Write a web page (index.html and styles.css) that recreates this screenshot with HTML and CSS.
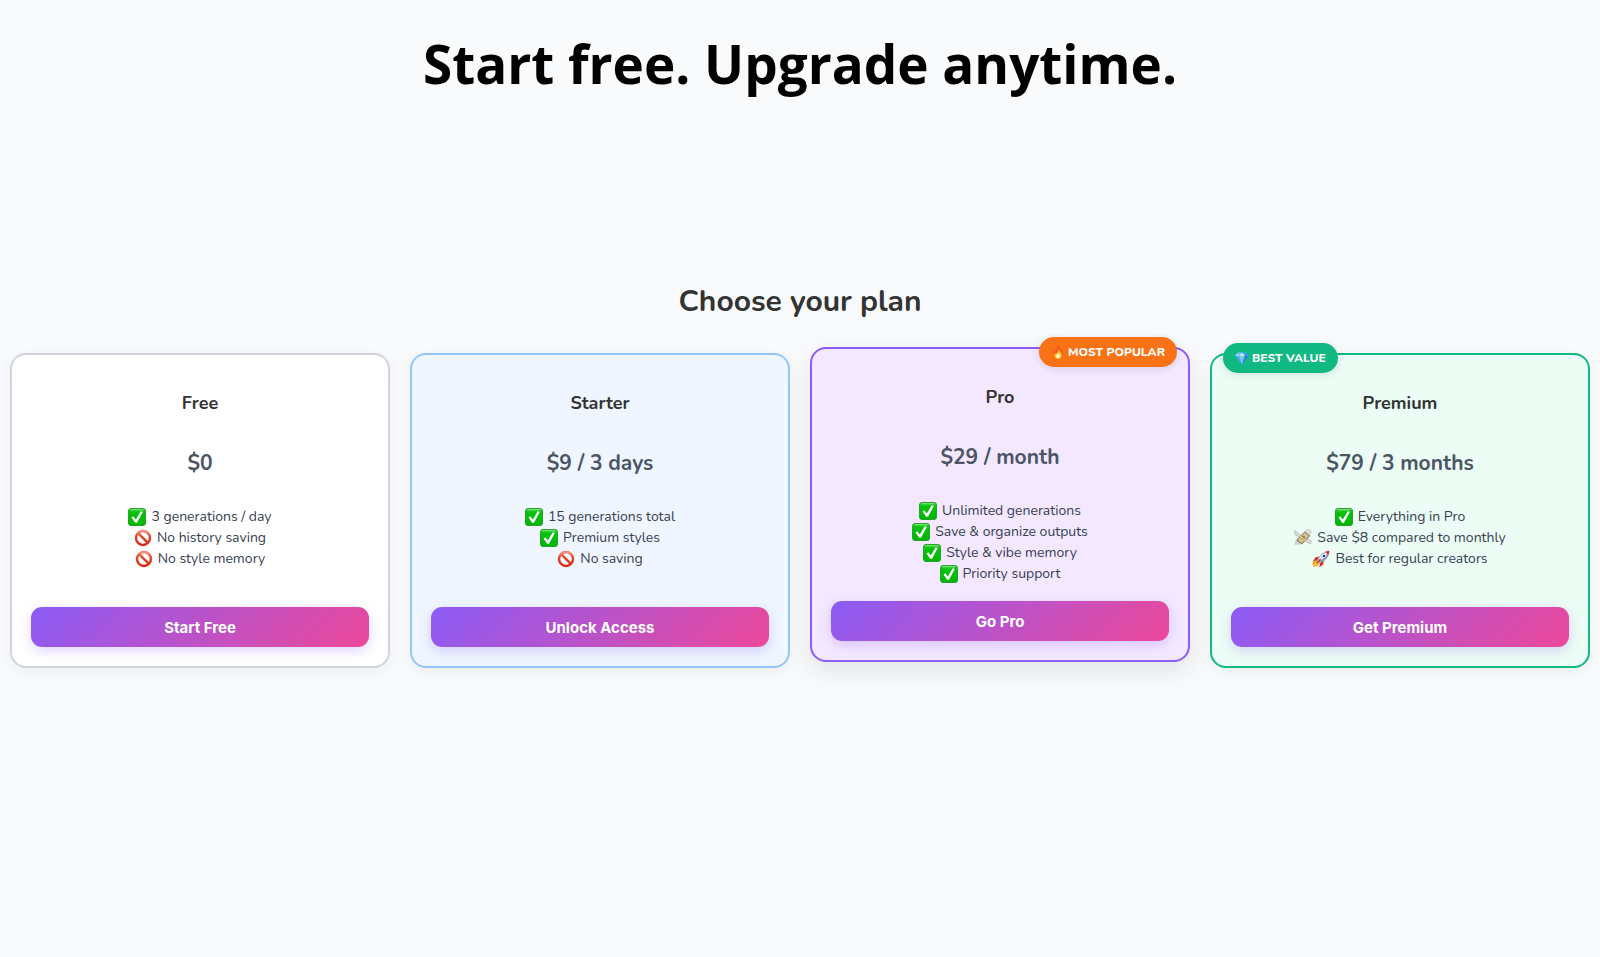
FILE: index.html
```html
<!DOCTYPE html>
<html lang="en">
<head>
<meta charset="utf-8">
<title>Pricing</title>
<link rel="stylesheet" href="styles.css">
</head>
<body>
<svg class="sprite" aria-hidden="true">
  <defs>
    <linearGradient id="g-check" x1="0" y1="0" x2="0" y2="1"><stop offset="0" stop-color="#3fd23f"/><stop offset=".25" stop-color="#06c20c"/><stop offset="1" stop-color="#02b505"/></linearGradient>
    <linearGradient id="g-no" gradientUnits="userSpaceOnUse" x1="0" y1="1" x2="0" y2="17"><stop offset="0" stop-color="#ee8068"/><stop offset=".4" stop-color="#e14a2e"/><stop offset="1" stop-color="#d6280f"/></linearGradient>
    <linearGradient id="g-fire" x1="0" y1="0" x2="0" y2="1"><stop offset="0" stop-color="#f2401c"/><stop offset="1" stop-color="#ff7a1a"/></linearGradient>
  </defs>
  <symbol id="check" viewBox="0 0 18 18">
    <rect x=".5" y=".5" width="17" height="17" rx="2.5" fill="url(#g-check)" stroke="#26a32a" stroke-width="1"/>
    <path d="M2.500 1.700H15.500" stroke="#9be99b" stroke-width=".8"/>
    <path d="M3.500 9.600 5.400 8.300 7.800 11.400 12.700 3.300 14.800 4.100 9 14.700H7.200Z" fill="#fff"/>
  </symbol>
  <symbol id="no" viewBox="0 0 18 18">
    <circle cx="9" cy="9" r="7" fill="#fff" fill-opacity=".35" stroke="url(#g-no)" stroke-width="2.500"/>
    <path d="M4.200 4.200 13.800 13.800" stroke="url(#g-no)" stroke-width="2.500"/>
    <path d="M4 4.200A6.900 6.900 0 0 1 14 4.200" fill="none" stroke="#f6b3a3" stroke-width=".7"/>
  </symbol>
  <symbol id="money" viewBox="0 0 18 18">
    <path d="M6.500 6 1 1.400 0 3.500 1.500 4 .800 5.500 2.500 5.800 2.200 7 5 7.500Z" fill="#d9d8d3" stroke="#a9a8a0" stroke-width=".5"/>
    <path d="M10 4.500 13 .4 14.700 1.200 16 .6 16.800 2.400 17.600 3.300 14.500 6.200Z" fill="#e4e2dd" stroke="#a9a8a0" stroke-width=".5"/>
    <path d="M12.500 9 17.500 12.500 16.500 13.300 17.200 14.500 15.500 14.700 10.500 12Z" fill="#d9d8d3" stroke="#a9a8a0" stroke-width=".5"/>
    <path d="M4 12 1 12.500 2 14 1 15.400 3.500 15 6.500 15.200Z" fill="#d9d8d3" stroke="#a9a8a0" stroke-width=".5"/>
    <path d="M2.500 11 10.800 2.800 15.800 6.800 8 15Z" fill="#b9a878" stroke="#7d7354" stroke-width=".8"/>
    <path d="M4.300 10.900 10.800 4.300 14 6.900 7.800 13.300Z" fill="#d8cba0"/>
    <circle cx="9.200" cy="8.800" r="2" fill="#8b8058"/>
    <path d="M5.800 7.600 11 11.900 12 10.900 6.800 6.700Z" fill="#f0cf62"/>
  </symbol>
  <symbol id="rocket" viewBox="0 0 18 18">
    <path d="M1.500 11 6 10 8.300 12.300 6.500 14.500 4.500 17 4 15.600 1 17.600 1.600 14.800 .3 14.500Z" fill="#ff9a1a"/>
    <path d="M3.300 12 5.800 11.300 7 12.500 4.200 14.900 2.500 15.600Z" fill="#ffe052"/>
    <path d="M7.500 6.500 3.300 7.500 1 11.200 5.700 9.900Z" fill="#e02b20"/>
    <path d="M11.800 10.800 11 14.800 7.200 17.300 8.300 12.500Z" fill="#e02b20"/>
    <path d="M5.400 10.300C7 6 10.500 2.200 17.200 1 16.500 7 13 10.800 7.900 12.900Z" fill="#d7e0ea" stroke="#7585a0" stroke-width=".6"/>
    <path d="M6.500 11.800C10.500 9.800 14 7 17.200 1 16.500 7 13 10.800 7.900 12.900Z" fill="#7f91b5"/>
    <path d="M13.300 1.800C14.400 1.400 15.800 1.100 17.200 1 17.100 2.500 16.900 3.800 16.300 5.100Z" fill="#e02b20"/>
    <circle cx="12" cy="6" r="1.700" fill="#28406d" stroke="#f5f7fa" stroke-width=".7"/>
    <path d="M8.500 9.300 4.500 13.400" stroke="#c4221b" stroke-width="1.300"/>
  </symbol>
  <symbol id="fire" viewBox="0 0 14 14">
    <path d="M6.900.300C9 1.700 8.700 4 9.900 5.500 10.200 4.800 10.100 4.200 10.500 3.700 11.800 5.200 12.600 7 12.500 9.100 12.400 12 10 13.800 7 13.800 3.800 13.800 1.600 12 1.500 9.200 1.400 7.500 2.200 6.300 2.900 5.200 3.400 5.600 3.600 6.100 3.900 6.800 5.100 5 7.400 3 6.900.300Z" fill="url(#g-fire)"/>
    <path d="M7.300 4C8.800 6.400 10.900 8 10.600 10.300 10.400 12.400 9 13.600 7 13.600 5 13.600 3.500 12.300 3.500 10.400 3.500 9.500 3.800 8.800 4.200 8.300L5 9.300C6.300 8 7.600 6.300 7.300 4Z" fill="#ffc928"/>
    <path d="M7.100 8C8 9.300 9.100 10 9 11.400 8.900 12.700 8 13.500 7 13.500 5.900 13.500 5 12.700 5 11.600 5 10.200 6.500 9.600 7.100 8Z" fill="#fff6c9"/>
  </symbol>
  <symbol id="gem" viewBox="0 0 14 14">
    <path d="M3 1.500H11L13.800 5 7 13.500.200 5Z" fill="#4aa9ee"/>
    <path d="M3 1.500 4.200 5H.200Z" fill="#9bdcfb"/>
    <path d="M3 1.500H7L4.200 5Z" fill="#6fc4f6"/>
    <path d="M7 1.500 9.800 5H4.200Z" fill="#c0ebfd"/>
    <path d="M11 1.500 13.800 5H9.800Z" fill="#3c93dd"/>
    <path d="M4.200 5H9.800L7 13.500Z" fill="#79c9f8"/>
    <path d="M9.800 5H13.800L7 13.500Z" fill="#2f7fcc"/>
  </symbol>
</svg>

<header class="hero"><h1 class="hero-title">Start free. Upgrade anytime.</h1></header>

<main class="pricing">
  <h2 class="pricing-title">Choose your plan</h2>
  <div class="plans">
    <section class="plan">
      <h3 class="plan-name">Free</h3>
      <p class="plan-price">$0</p>
      <ul class="features">
        <li><svg class="icon"><use href="#check"/></svg>3 generations / day</li>
        <li><svg class="icon"><use href="#no"/></svg>No history saving</li>
        <li><svg class="icon"><use href="#no"/></svg>No style memory</li>
      </ul>
      <button class="cta" type="button">Start Free</button>
    </section>
    <section class="plan plan-starter">
      <h3 class="plan-name">Starter</h3>
      <p class="plan-price">$9 / 3 days</p>
      <ul class="features">
        <li><svg class="icon"><use href="#check"/></svg>15 generations total</li>
        <li><svg class="icon"><use href="#check"/></svg>Premium styles</li>
        <li><svg class="icon"><use href="#no"/></svg>No saving</li>
      </ul>
      <button class="cta" type="button">Unlock Access</button>
    </section>
    <section class="plan plan-pro">
      <span class="badge badge-popular"><svg class="badge-icon"><use href="#fire"/></svg>MOST POPULAR</span>
      <h3 class="plan-name">Pro</h3>
      <p class="plan-price">$29 / month</p>
      <ul class="features">
        <li><svg class="icon"><use href="#check"/></svg>Unlimited generations</li>
        <li><svg class="icon"><use href="#check"/></svg>Save &amp; organize outputs</li>
        <li><svg class="icon"><use href="#check"/></svg>Style &amp; vibe memory</li>
        <li><svg class="icon"><use href="#check"/></svg>Priority support</li>
      </ul>
      <button class="cta" type="button">Go Pro</button>
    </section>
    <section class="plan plan-premium">
      <span class="badge badge-value"><svg class="badge-icon"><use href="#gem"/></svg>BEST VALUE</span>
      <h3 class="plan-name">Premium</h3>
      <p class="plan-price">$79 / 3 months</p>
      <ul class="features">
        <li><svg class="icon"><use href="#check"/></svg>Everything in Pro</li>
        <li><svg class="icon"><use href="#money"/></svg>Save $8 compared to monthly</li>
        <li><svg class="icon"><use href="#rocket"/></svg>Best for regular creators</li>
      </ul>
      <button class="cta" type="button">Get Premium</button>
    </section>
  </div>
</main>
</body>
</html>
```
FILE: styles.css
```css
* {
  box-sizing: border-box;
}

body {
  margin: 0;
  background: #f9fafc;
  color: #333;
  font-family: Nunito, "Noto Sans", sans-serif;
}

h1, h2, h3, p, ul {
  margin: 0;
  padding: 0;
}

.sprite {
  position: absolute;
  width: 0;
  height: 0;
}

.hero {
  padding: 28px 16px 0;
}

.hero-title {
  color: #000;
  font: 700 53px/72px "Open Sans", sans-serif;
  text-align: center;
}

.pricing {
  padding: 182px 10px 40px;
}

.pricing-title {
  font-size: 30px;
  font-weight: 700;
  line-height: 40px;
  text-align: center;
}

.plans {
  display: grid;
  grid-template-columns: repeat(4, 1fr);
  gap: 20px;
  margin-top: 31px;
}

.plan {
  position: relative;
  display: flex;
  flex-direction: column;
  padding: 36px 19px 19px;
  border: 2px solid #d1d5db;
  border-radius: 16px;
  background: #fff;
  box-shadow: 0 4px 16px rgba(0, 0, 0, .05);
  text-align: center;
}

.plan-starter {
  border-color: #93c5fd;
  background: #eff6ff;
}

.plan-pro {
  border-color: #8b5cf6;
  background: #f3e8ff;
  box-shadow: 0 8px 24px rgba(0, 0, 0, .1);
  transform: translateY(-6px);
}

.plan-premium {
  border-color: #10b981;
  background: #ecfdf5;
}

.plan-name {
  font-size: 18px;
  font-weight: 700;
  line-height: 24px;
}

.plan-price {
  margin: 34px 0 29px;
  color: #4b5563;
  font-size: 21px;
  font-weight: 700;
  line-height: 28px;
}

.features {
  flex: 1;
  margin-bottom: 17px;
  color: #374151;
  font-size: 14px;
  line-height: 21px;
  list-style: none;
}

.features li {
  display: flex;
  align-items: center;
  justify-content: center;
  gap: 5px;
}

.icon {
  width: 18px;
  height: 18px;
}

.cta {
  height: 40px;
  border: 0;
  border-radius: 11px;
  background: linear-gradient(135deg, #8b5cf6, #ec4899);
  box-shadow: 0 4px 12px rgba(139, 92, 246, .25);
  color: #fff;
  font: 700 15px Inter, sans-serif;
}

.badge {
  position: absolute;
  top: -12px;
  display: flex;
  align-items: center;
  gap: 3px;
  padding: 0 12px;
  border-radius: 15px;
  box-shadow: 0 2px 8px rgba(0, 0, 0, .1);
  color: #fff;
  font-size: 12px;
  font-weight: 800;
  line-height: 30px;
}

.badge-popular {
  right: 11px;
  background: #f97316;
}

.badge-value {
  left: 11px;
  background: #10b981;
}

.badge-icon {
  width: 14px;
  height: 14px;
}

@media (max-width: 1000px) {
  .plans {
    grid-template-columns: repeat(2, 1fr);
  }
}
```
